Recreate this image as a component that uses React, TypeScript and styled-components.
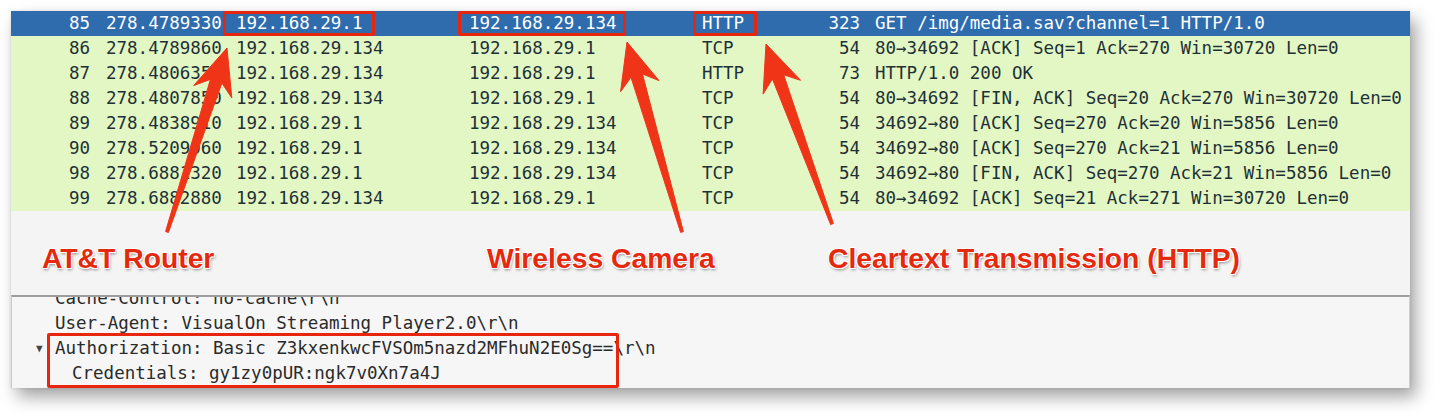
import React from 'react';
import styled, { createGlobalStyle } from 'styled-components';

const GlobalStyle = createGlobalStyle`
  html, body {
    margin: 0;
    padding: 0;
    background: #ffffff;
  }
`;

const Stage = styled.div`
  position: relative;
  width: 1440px;
  height: 420px;
  padding: 11px 0 0 11px;
  box-sizing: border-box;
  overflow: hidden;
`;

const Window = styled.div`
  width: 1399px;
  height: 377px;
  display: flex;
  flex-direction: column;
  background: #f4f4f4;
  box-shadow: 6px 9px 16px rgba(0, 0, 0, 0.36), 0 0 3px rgba(0, 0, 0, 0.12);
`;

const PacketList = styled.div`
  height: 284px;
  display: flex;
  flex-direction: column;
  font-family: 'DejaVu Sans Mono', 'Liberation Mono', monospace;
  font-size: 17.5px;
`;

const Row = styled.div<{ $selected?: boolean }>`
  display: grid;
  grid-template-columns: 95px 130px 233px 233px 88px 85px 1fr;
  height: 25px;
  line-height: 25px;
  white-space: nowrap;
  background: ${(p) => (p.$selected ? '#2e6cae' : '#e3f7c4')};
  color: ${(p) => (p.$selected ? '#ffffff' : '#1e3036')};
`;

const Cell = styled.div<{ $right?: boolean; $pad?: number }>`
  text-align: ${(p) => (p.$right ? 'right' : 'left')};
  padding-right: ${(p) => p.$pad ?? 0}px;
  overflow: visible;
`;

const Marked = styled.span<{ $before: number; $after: number }>`
  position: relative;
  display: inline-block;
  &::after {
    content: '';
    position: absolute;
    top: 0;
    bottom: 0;
    left: -${(p) => p.$before}px;
    right: -${(p) => p.$after}px;
    border: 3px solid #e8260e;
    border-radius: 2px;
  }
`;

const EmptyArea = styled.div`
  flex: 1;
  display: grid;
  grid-template-columns: 445px 341px auto;
  padding: 31px 0 0 31px;
  align-content: start;
`;

const Label = styled.div`
  font-family: 'Liberation Sans', Arial, sans-serif;
  font-weight: 700;
  font-size: 28.3px;
  line-height: 32px;
  color: #e5290e;
  text-shadow: -1px -1px 0 #fff, 1px -1px 0 #fff, -1px 1px 0 #fff, 1px 1px 0 #fff,
    1px 2px 3px rgba(0, 0, 0, 0.45);
`;

const DetailPane = styled.div`
  flex: 1;
  border-top: 2px solid #9d9d9d;
  border-left: 1px solid #c9c9c9;
  border-right: 1px solid #d0d0d0;
  background: #f6f6f6;
  overflow: hidden;
  font-family: 'DejaVu Sans Mono', 'Liberation Mono', monospace;
  font-size: 17.5px;
  color: #2a2a2a;
`;

// the tree view is scrolled down a little, so the first line is half hidden
const DetailScroll = styled.div`
  margin-top: -11px;
`;

const DetailLine = styled.div<{ $indent: number }>`
  height: 25px;
  line-height: 25px;
  white-space: nowrap;
  padding-left: ${(p) => p.$indent}px;
  display: flex;
  align-items: center;
`;

const Expander = styled.span`
  width: 16px;
  margin-left: -19px;
  margin-right: 3px;
  font-size: 11px;
  color: #444;
`;

const AuthGroup = styled.div`
  position: relative;
  &::after {
    content: '';
    position: absolute;
    left: 35px;
    width: 572px;
    top: -3px;
    height: 55px;
    box-sizing: border-box;
    border: 3px solid #e8260e;
    border-radius: 2px;
  }
`;

const ArrowLayer = styled.svg`
  position: absolute;
  top: 0;
  left: 0;
  pointer-events: none;
`;

type Packet = {
  no: number;
  time: string;
  src: string;
  dst: string;
  proto: string;
  len: number;
  info: string;
};

const packets: Packet[] = [
  { no: 85, time: '278.4789330', src: '192.168.29.1', dst: '192.168.29.134', proto: 'HTTP', len: 323, info: 'GET /img/media.sav?channel=1 HTTP/1.0' },
  { no: 86, time: '278.4789860', src: '192.168.29.134', dst: '192.168.29.1', proto: 'TCP', len: 54, info: '80→34692 [ACK] Seq=1 Ack=270 Win=30720 Len=0' },
  { no: 87, time: '278.4806350', src: '192.168.29.134', dst: '192.168.29.1', proto: 'HTTP', len: 73, info: 'HTTP/1.0 200 OK' },
  { no: 88, time: '278.4807850', src: '192.168.29.134', dst: '192.168.29.1', proto: 'TCP', len: 54, info: '80→34692 [FIN, ACK] Seq=20 Ack=270 Win=30720 Len=0' },
  { no: 89, time: '278.4838910', src: '192.168.29.1', dst: '192.168.29.134', proto: 'TCP', len: 54, info: '34692→80 [ACK] Seq=270 Ack=20 Win=5856 Len=0' },
  { no: 90, time: '278.5209060', src: '192.168.29.1', dst: '192.168.29.134', proto: 'TCP', len: 54, info: '34692→80 [ACK] Seq=270 Ack=21 Win=5856 Len=0' },
  { no: 98, time: '278.6881320', src: '192.168.29.1', dst: '192.168.29.134', proto: 'TCP', len: 54, info: '34692→80 [FIN, ACK] Seq=270 Ack=21 Win=5856 Len=0' },
  { no: 99, time: '278.6882880', src: '192.168.29.134', dst: '192.168.29.1', proto: 'TCP', len: 54, info: '80→34692 [ACK] Seq=21 Ack=271 Win=30720 Len=0' },
];

// tapered arrow polygon from tail to tip
function arrowPoints(tx: number, ty: number, px: number, py: number) {
  const dx = px - tx;
  const dy = py - ty;
  const l = Math.hypot(dx, dy);
  const ux = dx / l;
  const uy = dy / l;
  const nx = -uy;
  const ny = ux;
  const headLen = 46;
  const headHalf = 20;
  const neckBack = 35;
  const neckHalf = 6;
  const tailHalf = 1.5;
  const pt = (along: number, side: number) =>
    `${(px - ux * along + nx * side).toFixed(1)},${(py - uy * along + ny * side).toFixed(1)}`;
  return [
    pt(0, 0),
    pt(headLen, headHalf),
    pt(neckBack, neckHalf),
    `${(tx + nx * tailHalf).toFixed(1)},${(ty + ny * tailHalf).toFixed(1)}`,
    `${(tx - nx * tailHalf).toFixed(1)},${(ty - ny * tailHalf).toFixed(1)}`,
    pt(neckBack, -neckHalf),
    pt(headLen, -headHalf),
  ].join(' ');
}

const arrows = [
  { tail: [167, 232], tip: [227, 48] },
  { tail: [682, 232], tip: [627, 42] },
  { tail: [832, 224], tip: [766, 44] },
];

export default function App() {
  return (
    <>
      <GlobalStyle />
      <Stage>
        <Window>
          <PacketList>
            {packets.map((p, i) => {
              const sel = i === 0;
              return (
                <Row key={p.no} $selected={sel}>
                  <Cell $right $pad={16}>{p.no}</Cell>
                  <Cell>{p.time}</Cell>
                  <Cell>{sel ? <Marked $before={13} $after={13}>{p.src}</Marked> : p.src}</Cell>
                  <Cell>{sel ? <Marked $before={11} $after={9}>{p.dst}</Marked> : p.dst}</Cell>
                  <Cell>{sel ? <Marked $before={9} $after={13}>{p.proto}</Marked> : p.proto}</Cell>
                  <Cell $right $pad={15}>{p.len}</Cell>
                  <Cell>{p.info}</Cell>
                </Row>
              );
            })}
            <EmptyArea>
              <Label>AT&amp;T Router</Label>
              <Label>Wireless Camera</Label>
              <Label>Cleartext Transmission (HTTP)</Label>
            </EmptyArea>
          </PacketList>
          <DetailPane>
            <DetailScroll>
              <DetailLine $indent={43}>Cache-Control: no-cache\r\n</DetailLine>
              <DetailLine $indent={43}>User-Agent: VisualOn Streaming Player2.0\r\n</DetailLine>
              <AuthGroup>
                <DetailLine $indent={43}>
                  <Expander>▼</Expander>
                  Authorization: Basic Z3kxenkwcFVSOm5nazd2MFhuN2E0Sg==\r\n
                </DetailLine>
                <DetailLine $indent={60}>Credentials: gy1zy0pUR:ngk7v0Xn7a4J</DetailLine>
              </AuthGroup>
            </DetailScroll>
          </DetailPane>
        </Window>
        <ArrowLayer width={1440} height={420} viewBox="0 0 1440 420">
          {arrows.map((a, i) => (
            <polygon
              key={i}
              points={arrowPoints(a.tail[0], a.tail[1], a.tip[0], a.tip[1])}
              fill="#ef3418"
              stroke="#ef3418"
              strokeWidth={1}
              strokeLinejoin="round"
            />
          ))}
        </ArrowLayer>
      </Stage>
    </>
  );
}
